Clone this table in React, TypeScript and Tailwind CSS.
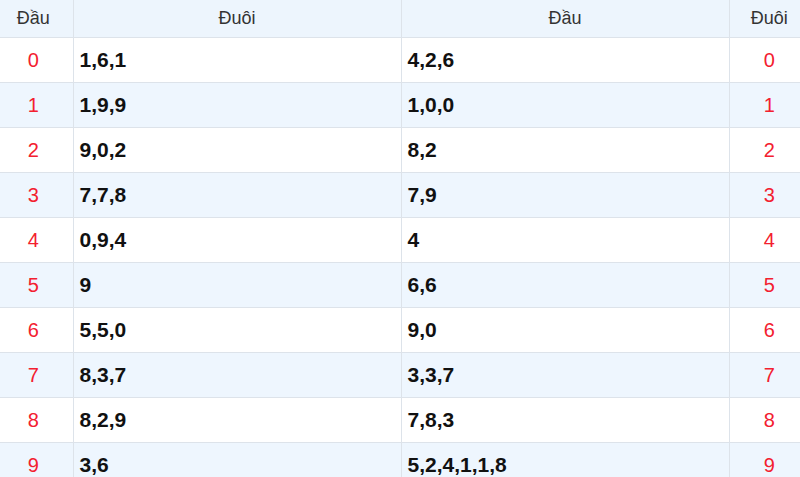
const rows = [
  ["0", "1,6,1", "4,2,6", "0"],
  ["1", "1,9,9", "1,0,0", "1"],
  ["2", "9,0,2", "8,2", "2"],
  ["3", "7,7,8", "7,9", "3"],
  ["4", "0,9,4", "4", "4"],
  ["5", "9", "6,6", "5"],
  ["6", "5,5,0", "9,0", "6"],
  ["7", "8,3,7", "3,3,7", "7"],
  ["8", "8,2,9", "7,8,3", "8"],
  ["9", "3,6", "5,2,4,1,1,8", "9"],
];

const App = () => {
  return (
    <div className="w-[800px] h-[477px] overflow-hidden bg-white font-['Liberation_Sans',Arial,sans-serif]">
      <table className="w-[800px] border-collapse table-fixed">
        <colgroup>
          <col className="w-[73px]" />
          <col className="w-[328px]" />
          <col className="w-[328px]" />
          <col className="w-[71px]" />
        </colgroup>
        <thead>
          <tr className="h-[37px] bg-[#edf5fd] text-[18px] text-[#333] border-b border-[#dde3ea]">
            <th className="pr-[6px] font-normal text-center border-r border-[#dde3ea]">Đầu</th>
            <th className="font-normal text-center border-r border-[#dde3ea]">Đuôi</th>
            <th className="font-normal text-center border-r border-[#dde3ea]">Đầu</th>
            <th className="pl-[9px] font-normal text-center">Đuôi</th>
          </tr>
        </thead>
        <tbody>
          {rows.map((r, i) => (
            <tr key={i} className={`h-[45px] border-b border-[#dde3ea] ${i % 2 === 1 ? "bg-[#eef6fe]" : "bg-white"}`}>
              <td className="pr-[6px] text-center text-[20px] text-[#f3202f] border-r border-[#dde3ea]">{r[0]}</td>
              <td className="pl-[6px] text-[21px] font-bold text-[#111] border-r border-[#dde3ea]">{r[1]}</td>
              <td className="pl-[6px] text-[21px] font-bold text-[#111] border-r border-[#dde3ea]">{r[2]}</td>
              <td className="pl-[9px] text-center text-[20px] text-[#f3202f]">{r[3]}</td>
            </tr>
          ))}
        </tbody>
      </table>
    </div>
  );
};

export default App;
